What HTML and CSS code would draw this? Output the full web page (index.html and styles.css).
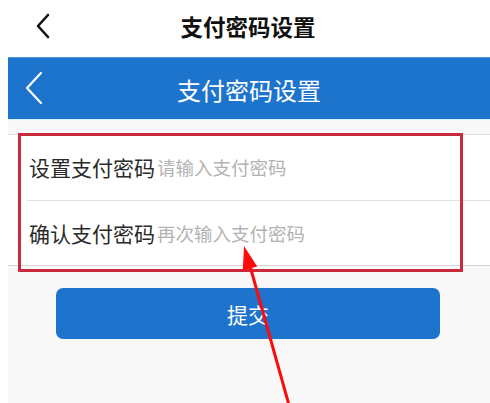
FILE: index.html
```html
<!DOCTYPE html>
<html lang="zh-CN">
<head>
<meta charset="utf-8">
<link rel="stylesheet" href="styles.css">
</head>
<body>
<header class="top-bar">
  <svg class="top-back" width="16" height="26" viewBox="0 0 16 26"><path d="M13 2 L3 13 L13 24" fill="none" stroke="#111" stroke-width="2.6" stroke-linecap="round" stroke-linejoin="round"/></svg>
  <h1 class="top-title">支付密码设置</h1>
</header>
<main class="screen">
  <div class="app-bar">
    <svg class="app-back" width="20" height="34" viewBox="0 0 20 34"><path d="M17 2 L3 17 L17 32" fill="none" stroke="#fff" stroke-width="2.2" stroke-linecap="round" stroke-linejoin="round"/></svg>
    <div class="app-title">支付密码设置</div>
  </div>
  <div class="app-bar-edge"></div>
  <section class="form">
    <div class="row">
      <span class="label">设置支付密码</span><span class="placeholder">请输入支付密码</span>
    </div>
    <div class="row">
      <span class="label">确认支付密码</span><span class="placeholder">再次输入支付密码</span>
    </div>
  </section>
  <div class="btn-wrap">
    <button class="submit">提交</button>
  </div>
</main>
<div class="highlight"></div>
<svg class="arrow" width="490" height="403" viewBox="0 0 490 403">
  <line x1="250" y1="266" x2="289" y2="405" stroke="#ff0a0a" stroke-width="3"/>
  <polygon points="244,246 242.8,270.5 257.2,266.5" fill="#ff0a0a"/>
</svg>
</body>
</html>
```
FILE: styles.css
```css
* { box-sizing: border-box; }
html, body { margin: 0; padding: 0; }
body {
  width: 490px;
  height: 403px;
  overflow: hidden;
  background: #ffffff;
  font-family: "Noto Sans CJK SC", "Noto Sans", sans-serif;
  position: relative;
}
.top-bar {
  height: 57px;
  display: flex;
  align-items: center;
  justify-content: center;
  position: relative;
  background: #fff;
}
.top-back {
  position: absolute;
  left: 35px;
  top: 13px;
}
.top-title {
  margin: 0;
  font-size: 22.5px;
  font-weight: bold;
  color: #111;
  padding-left: 6px;
  line-height: 1;
  margin-top: -4px;
}
.screen {
  margin-left: 8px;
  background: #f8f8f8;
  height: 346px;
}
.app-bar {
  height: 62px;
  background: #1d74cd;
  border-top: 1px solid #4f95d8;
  display: flex;
  align-items: center;
  justify-content: center;
  position: relative;
}
.app-back {
  position: absolute;
  left: 16px;
  top: 13px;
}
.app-title {
  color: #fff;
  font-size: 24px;
  line-height: 1;
  margin-top: 2px;
}
.app-bar-edge {
  height: 1px;
  background: #d6f2f2;
}
.form {
  margin-top: 14px;
  background: #fff;
  border-top: 1px solid #dcdcdc;
  border-bottom: 1px solid #d4d4d4;
}
.row {
  height: 65px;
  display: flex;
  align-items: center;
  padding-left: 21px;
  padding-bottom: 1px;
}
.row + .row {
  border-top: 1px solid #e2e2e2;
  margin-left: 19px;
  padding-left: 2px;
}
.label {
  font-size: 21px;
  color: #2a2a2a;
}
.placeholder {
  font-size: 18.5px;
  color: #b3b3b3;
  margin-left: 2px;
}
.btn-wrap {
  display: flex;
  padding: 22px 42px 0 48px;
}
.submit {
  width: 384px;
  height: 51px;
  border: none;
  border-radius: 7px;
  background: #1e74cc;
  color: #fff;
  font-family: "Noto Sans CJK SC", "Noto Sans", sans-serif;
  font-size: 21px;
  padding: 0;
}
.highlight {
  position: absolute;
  left: 18px;
  top: 133px;
  width: 445px;
  height: 139px;
  border: 3px solid #c82a3c;
  pointer-events: none;
}
.arrow {
  position: absolute;
  left: 0;
  top: 0;
  pointer-events: none;
}
```
